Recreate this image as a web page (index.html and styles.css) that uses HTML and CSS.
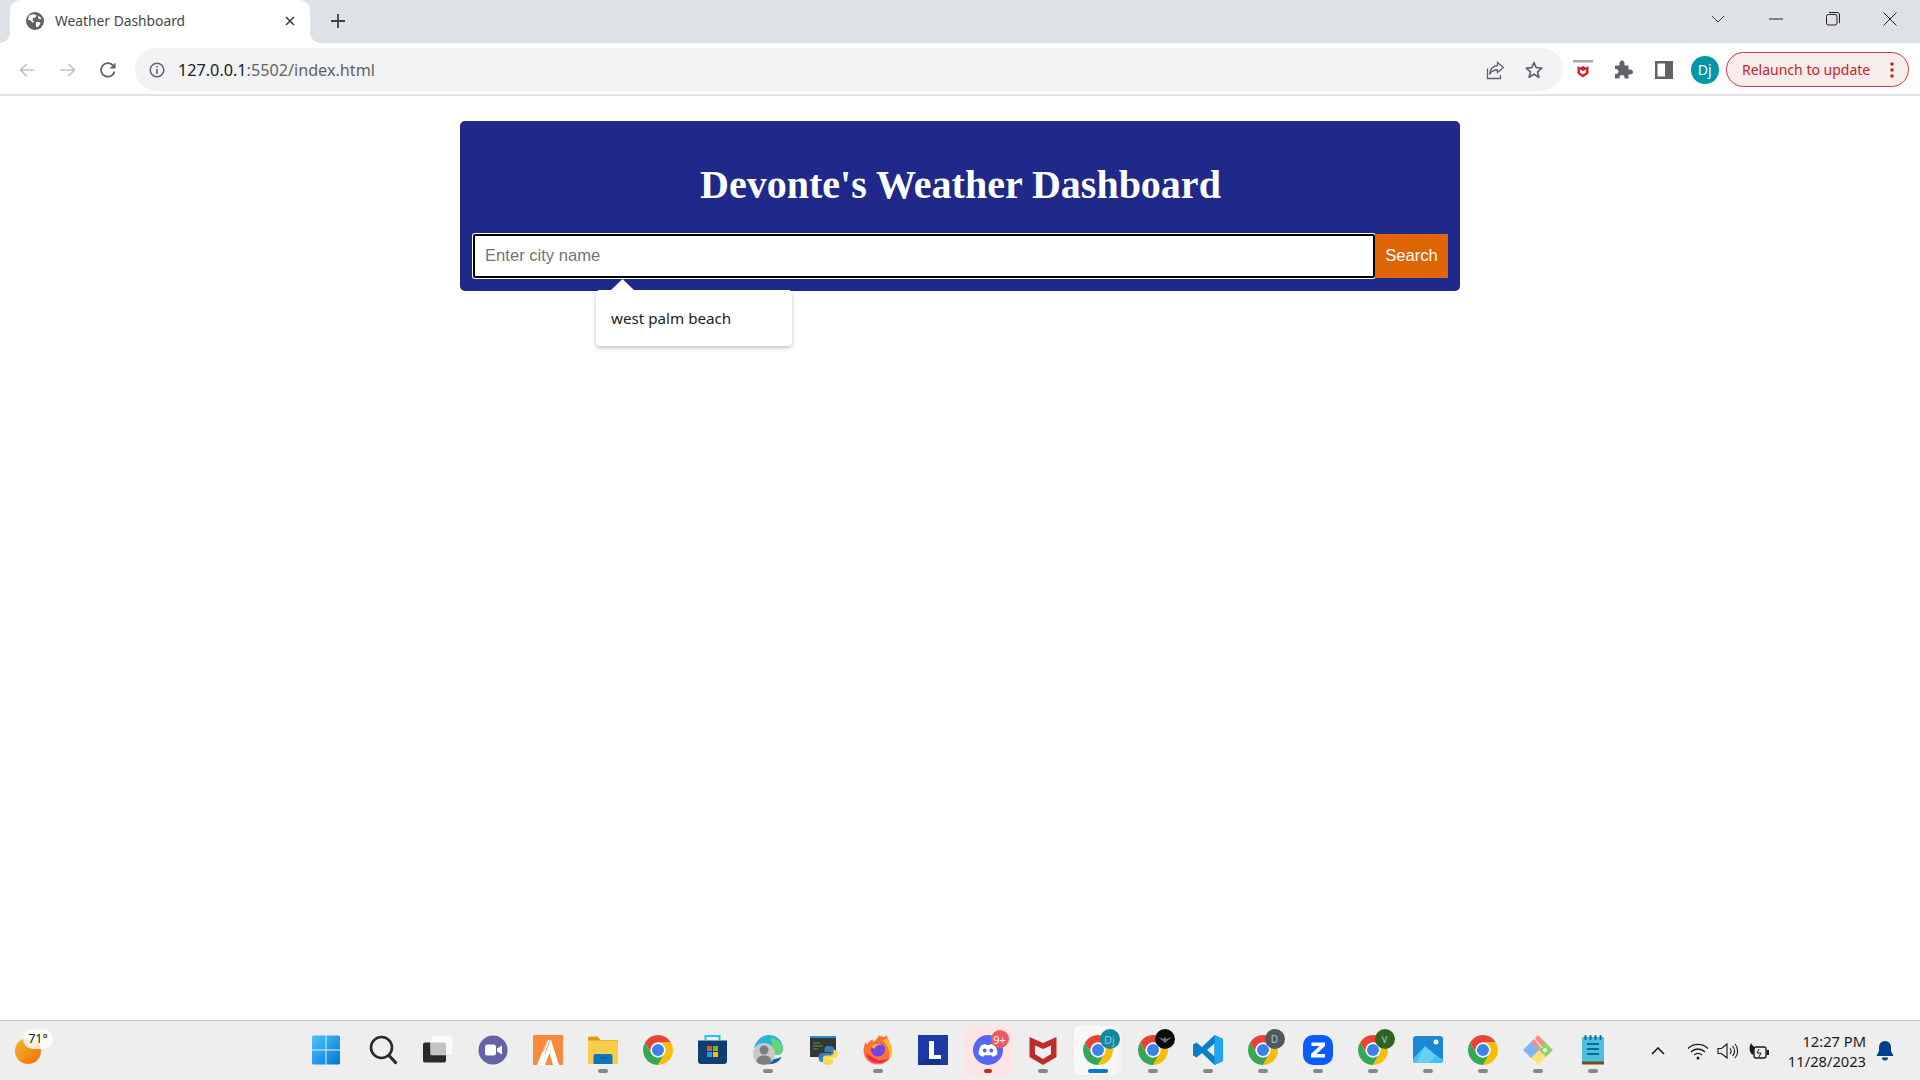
FILE: index.html
```html
<!DOCTYPE html>
<html lang="en">
<head>
<meta charset="utf-8">
<title>Weather Dashboard</title>
<link rel="stylesheet" href="styles.css">
</head>
<body>
<svg class="defs" width="0" height="0" aria-hidden="true">
  <symbol id="chrome" viewBox="4 4 40 40">
    <path fill="#ea4335" d="M41.32 14A20 20 0 0 0 6.68 14L15.34 29A10 10 0 0 1 24 14Z"/>
    <path fill="#34a853" d="M6.68 14A20 20 0 0 0 24 44L32.66 29A10 10 0 0 1 15.34 29Z"/>
    <path fill="#fbbc04" d="M24 44A20 20 0 0 0 41.32 14H24A10 10 0 0 1 32.66 29Z"/>
    <circle cx="24" cy="24" r="10" fill="#fff"/>
    <circle cx="24" cy="24" r="8" fill="#3b82ea"/>
  </symbol>
</svg>

<header class="tabstrip">
  <div class="tab">
    <svg class="favicon" viewBox="0 0 18 18"><circle cx="9" cy="9" r="9" fill="#5f6368"/><path fill="#fff" d="M3 3.5 7.5 2.2 10.5 3 9.5 5.5 7 6 6.5 8 8 9.5 6.8 11 4.5 8.5 2 7.5ZM10 10 13.5 10 14.5 11.5 12.5 14.5 10.5 15.5 10 13ZM12.5 3.5 15.5 6.5 14 7.5 12 6Z"/></svg>
    <span class="tab-title">Weather Dashboard</span>
    <svg class="tab-close" viewBox="0 0 10 10"><path d="M1 1 9 9M9 1 1 9" stroke="#3c4043" stroke-width="1.6" fill="none"/></svg>
  </div>
  <svg class="newtab" viewBox="0 0 14 14"><path d="M7 0V14M0 7H14" stroke="#3c4043" stroke-width="1.8" fill="none"/></svg>
  <div class="winctl">
    <span class="winbtn"><svg width="14" height="8" viewBox="0 0 14 8"><path d="M1 1 7 7 13 1" stroke="#3c4043" fill="none"/></svg></span>
    <span class="winbtn"><svg width="14" height="2" viewBox="0 0 14 2"><path d="M0 1H14" stroke="#222" fill="none"/></svg></span>
    <span class="winbtn"><svg width="14" height="14" viewBox="0 0 14 14"><rect x=".5" y="2.5" width="10.5" height="10.5" rx="2" stroke="#222" fill="none"/><path d="M3 .5H11A2.5 2.5 0 0 1 13.5 3V11" stroke="#222" fill="none"/></svg></span>
    <span class="winbtn"><svg width="14" height="14" viewBox="0 0 14 14"><path d="M.5.5 13.5 13.5M13.5.5.5 13.5" stroke="#222" fill="none"/></svg></span>
  </div>
</header>

<nav class="toolbar">
  <span class="navbtn"><svg width="16" height="14" viewBox="0 0 16 14"><path d="M15.5 7H1.5M7.5 1 1.5 7l6 6" stroke="#bdc1c6" stroke-width="1.7" fill="none"/></svg></span>
  <span class="navbtn"><svg width="16" height="14" viewBox="0 0 16 14"><path d="M.5 7h14M8.5 1l6 6-6 6" stroke="#bdc1c6" stroke-width="1.7" fill="none"/></svg></span>
  <span class="navbtn"><svg width="18" height="18" viewBox="0 0 18 18"><path d="M15.5 10.5A6.8 6.8 0 1 1 13.8 4.2" stroke="#5f6368" stroke-width="1.8" fill="none"/><path d="M16.5 1.5V7.5H10.5Z" fill="#5f6368"/></svg></span>
  <div class="omnibox">
    <svg class="info" width="16" height="16" viewBox="0 0 16 16"><circle cx="8" cy="8" r="6.8" stroke="#5f6368" stroke-width="1.5" fill="none"/><path d="M8 7V12M8 4V5.6" stroke="#5f6368" stroke-width="1.6"/></svg>
    <span class="url"><span class="host">127.0.0.1</span>:5502/index.html</span>
    <span class="omni-actions">
      <svg width="20" height="20" viewBox="0 0 20 20"><path d="M2.5 8.5V18.5H15.5V15" stroke="#5f6368" stroke-width="1.3" fill="none"/><path d="M12.5 2.5 18.5 7.5 12.5 12.5V10C8.500 10 6 11.500 4.500 14.500 5 9.500 8 6 12.500 5.500Z" stroke="#5f6368" stroke-width="1.3" fill="none"/></svg>
      <svg width="20" height="20" viewBox="0 0 20 20"><path d="M10 2.500 12.200 7.700 17.800 8.100 13.500 11.800 14.900 17.300 10 14.300 5.100 17.300 6.500 11.800 2.200 8.100 7.800 7.700Z" stroke="#5f6368" stroke-width="1.7" stroke-linejoin="round" fill="none"/></svg>
    </span>
  </div>
  <span class="extbtn"><svg width="20" height="20" viewBox="0 0 20 20"><rect x="0" y="0" width="20" height="2.500" fill="#a8a8a8"/><path d="M4.500 6 7 7.500 10 6 13 7.500 15.500 6V13.500L10 17.500 4.500 13.500Z" fill="#d3232a"/><path d="M7 9.500 10 11 13 9.500V12.500L10 14.500 7 12.500Z" fill="#fff"/></svg></span>
  <span class="extbtn"><svg width="19" height="19" viewBox="0 0 19 19"><path fill="#5f6368" d="M1 5.500H5.500C5 2 6.500 .5 8 .5S11 2 10.500 5.500H14.500V9.500C18 9 19 10.500 19 12S18 15 14.500 14.500V18.500H10.500C11 16 9.500 15 8 15S5 16 5.500 18.500H1V14C3.500 14.500 4.500 13 4.500 11.500S3.500 8.500 1 9Z"/></svg></span>
  <span class="extbtn"><svg width="18" height="18" viewBox="0 0 18 18"><path fill="#5f6368" fill-rule="evenodd" d="M0 0H18V18H0ZM2.500 2.500V15.500H10V2.500Z"/></svg></span>
  <span class="extbtn"><span class="avatar">Dj</span></span>
  <div class="relaunch">
    <span class="relaunch-text">Relaunch to update</span>
    <svg width="4" height="16" viewBox="0 0 4 16"><circle cx="2" cy="2" r="1.700" fill="#c5221f"/><circle cx="2" cy="8" r="1.700" fill="#c5221f"/><circle cx="2" cy="14" r="1.700" fill="#c5221f"/></svg>
  </div>
</nav>

<main class="page">
  <section class="card">
    <h1 class="title">Devonte's Weather Dashboard</h1>
    <form class="search">
      <input class="city" type="text" placeholder="Enter city name">
      <button class="go" type="button">Search</button>
    </form>
    <div class="suggest">west palm beach</div>
  </section>
</main>

<footer class="taskbar">
  <div class="weather">
    <span class="sun"></span>
    <span class="temp">71°</span>
  </div>
  <div class="apps">
    <span class="app app-start"><svg class="ic" viewBox="0 0 30 30"><defs><linearGradient id="w" x1="0" y1="0" x2="1" y2="1"><stop offset="0" stop-color="#4cc2ff"/><stop offset="1" stop-color="#0078d4"/></linearGradient></defs><path fill="url(#w)" d="M1 2A1.500 1.500 0 0 1 2.500.5H14.500V14.500H1ZM15.500.5H27.500A1.500 1.500 0 0 1 29 2V14.500H15.500ZM1 15.500H14.500V29.500H2.500A1.500 1.500 0 0 1 1 28ZM15.500 15.500H29V28A1.500 1.500 0 0 1 27.500 29.500H15.500Z"/></svg></span>
    <span class="app"><svg class="ic" viewBox="0 0 30 30"><circle cx="13.500" cy="12.500" r="10.500" stroke="#2b2b2b" stroke-width="2.600" fill="none"/><path d="M21 20.500 27.500 27.500" stroke="#2b2b2b" stroke-width="3.200" stroke-linecap="round"/></svg></span>
    <span class="app"><svg class="ic" viewBox="0 0 30 30"><rect x="0" y="7.500" width="23" height="20" rx="2" fill="#2a2a2a"/><rect x="7.500" y="0" width="22.500" height="20" rx="1.500" fill="#fff" fill-opacity=".72" stroke="#ddd" stroke-width=".5"/></svg></span>
    <span class="app"><svg class="ic" viewBox="0 0 30 30"><circle cx="15" cy="15" r="14.500" fill="#6264a7"/><rect x="7" y="9.500" width="11" height="11" rx="2.500" fill="#fff"/><path d="M19 13.500 24 10.500V19.500L19 16.500Z" fill="#fff"/></svg></span>
    <span class="app"><svg class="ic" viewBox="0 0 30 30"><rect width="30" height="30" fill="#f98a3b"/><path d="M4 30 14 5H18L26 30H20L16.500 18 12 30Z" fill="#fff"/><path d="M14.500 5 10 17M17 5 12 19" stroke="#f98a3b" stroke-width=".8"/></svg></span>
    <span class="app on"><svg class="ic" viewBox="0 0 30 30"><path d="M0 3A1.500 1.500 0 0 1 1.500 1.500H9.500L12.500 5H30V10H0Z" fill="#d99f0b"/><path d="M0 5.500H30V29H0Z" fill="#fbcd4d"/><path d="M5.500 21A2 2 0 0 1 7.500 19H22A2.500 2.500 0 0 1 24.500 21.500V29H5.500Z" fill="#0a76bd" transform="translate(0 0)"/><path d="M11 23H20" stroke="#05507f"/></svg></span>
    <span class="app"><svg class="ic" viewBox="0 0 48 48"><use href="#chrome"/></svg></span>
    <span class="app"><svg class="ic" viewBox="0 0 30 30"><path d="M7.500 5V1H21.500V5" stroke="#28c0ef" stroke-width="2" fill="none"/><path d="M0 5.500H29V26A3 3 0 0 1 26 29H3A3 3 0 0 1 0 26Z" fill="#0e3f73"/><rect x="9" y="11" width="5" height="5" fill="#f25022"/><rect x="15" y="11" width="5" height="5" fill="#7fba00"/><rect x="9" y="17" width="5" height="5" fill="#00a4ef"/><rect x="15" y="17" width="5" height="5" fill="#ffb900"/></svg></span>
    <span class="app on"><svg class="ic" viewBox="0 0 30 30"><path d="M1 13C3 5 9 0 16 0 24 0 30 6 30 14 30 18 27 20 23 20H12C12 12 8 9 1 13Z" fill="#2bb4d8"/><path d="M18 3C25 4 30 9 30 14 30 18 27 20 23 20H16C19 15 20 9 18 3Z" fill="#63d678"/><path d="M14 29C20 30 27 27 28.500 21.500 25 24 20 24.500 17 24Z" fill="#0f5fa8"/><circle cx="11" cy="19" r="11" fill="#c9c9c9"/><circle cx="11" cy="15" r="4.500" fill="#7d7d7d"/><path d="M3.500 27C4 22 7 20.500 11 20.500S18 22 18.500 27C14.500 30.500 7.500 30.500 3.500 27Z" fill="#7d7d7d"/></svg></span>
    <span class="app"><svg class="ic" viewBox="0 0 30 30"><path d="M2 1.500H28V22H2Z" fill="#353535"/><path d="M2 1H28V3H2Z" fill="#2a8fcb"/><path d="M5 8H12M5 11H15M5 14H10" stroke="#3ea84a"/><path d="M21 11C17 11 16.500 12.500 16.500 15V17H23V18H14C11.500 18 10.500 20 10.500 22.500S12 27 14 27H16V24C16 22 17.500 21 20 21H24C25.500 21 26.500 20 26.500 18.500V15C26.500 12.500 25 11 21 11Z" fill="#3b7fb4"/><path d="M22 30C26 30 26.500 28.500 26.500 26V24H20V23H29C31 23 31 21 31 19 31 17 30 15 28 15H27V17.500C27 19.500 25.500 20.500 23 20.500H19C17.500 20.500 16.500 21.500 16.500 23V26C16.500 28.500 18 30 22 30Z" fill="#fbd94f" transform="translate(-1.500 0)"/></svg></span>
    <span class="app on"><svg class="ic" viewBox="0 0 30 30"><path d="M29 16C29 24 22 29.500 15 29.500 7 29.500 .5 23.500 .5 15.500.5 12 1.500 9 3 7L4 10C6 6 8 5 10 4.500 9.500 6 10 7 10 7 12 5.500 15 3 16 .5 20 2 22 3 23 0 25 3 26 6 26 7 28 9.500 29 12.500 29 16Z" fill="#ff7139"/><path d="M24 3 26 7C28 9.500 29 12.500 29 16 29 19 28 21.500 26 24 27 16 25 9 19 5 21 5 23 4.500 24 3Z" fill="#ffbd2e"/><path d="M3 19C5 25 10 28 15 28 20 28 24 26 26 23 22 25.500 17 26 13 24 9 22 7 21 3 19Z" fill="#e62a55"/><circle cx="15" cy="14.500" r="7" fill="#7542e5"/><path d="M8 12C10 8 16 7 20 10 15 9 12 11 12 14Z" fill="#ffa436"/></svg></span>
    <span class="app"><svg class="ic" viewBox="0 0 30 30"><rect width="30" height="30" fill="#1b3aa6"/><path d="M11 6H16V20H23V24H11Z" fill="#fff"/><path d="M0 30 9 21V24H22V30Z" fill="#0e2a7c" fill-opacity=".55"/></svg></span>
    <span class="app app-alert"><svg class="ic" viewBox="0 0 30 30"><circle cx="15" cy="15" r="15" fill="#5865f2"/><path d="M8 10.500C10 9.500 11.500 9 12.500 9L13 10H17L17.500 9C18.500 9 20 9.500 22 10.500 24 13.500 24.500 16.500 24.300 19.500 22.500 20.800 21 21.500 19.500 21.800L18.500 20.300H11.500L10.500 21.800C9 21.500 7.500 20.800 5.700 19.500 5.500 16.500 6 13.500 8 10.500Z" fill="#fff"/><circle cx="11.700" cy="15.500" r="1.900" fill="#5865f2"/><circle cx="18.300" cy="15.500" r="1.900" fill="#5865f2"/></svg><span class="badge badge-red">9+</span></span>
    <span class="app on"><svg class="ic" viewBox="0 0 30 30"><path d="M1.500 2 15 8 28.500 2V22L15 30 1.500 22Z" fill="#bd2d2d"/><path d="M7 10.500 15 14 23 10.500V19L15 24 7 19Z" fill="#eee"/></svg></span>
    <span class="app app-active on"><svg class="ic" viewBox="0 0 48 48"><use href="#chrome"/></svg><span class="badge badge-chrome badge-teal">Dj</span></span>
    <span class="app on"><svg class="ic" viewBox="0 0 48 48"><use href="#chrome"/></svg><span class="badge badge-chrome badge-black"><svg width="14" height="7" viewBox="0 0 14 7"><path d="M0 1 6 3 7 0 8 3 14 1 9 5 7 7 5 5Z" fill="#777"/></svg></span></span>
    <span class="app on"><svg class="ic" viewBox="0 0 30 30"><path d="M21.500 0 30 4V26L21.500 30 9 18 3.500 22.500 0 20.500V9.500L3.500 7.500 9 12ZM21.500 8.500 14 15 21.500 21.500Z" fill="#0a7fc9"/><path d="M21.500 0 30 4V26L21.500 30Z" fill="#1fa5f1"/></svg></span>
    <span class="app on"><svg class="ic" viewBox="0 0 48 48"><use href="#chrome"/></svg><span class="badge badge-chrome badge-slate">D</span></span>
    <span class="app on"><svg class="ic" viewBox="0 0 30 30"><rect width="30" height="30" rx="10" fill="#0b5cff"/><path d="M8.500 7.500H22V11L13.500 19H22V22.500H8V19L16.500 11H8.500Z" fill="#fff"/></svg></span>
    <span class="app on"><svg class="ic" viewBox="0 0 48 48"><use href="#chrome"/></svg><span class="badge badge-chrome badge-green">V</span></span>
    <span class="app on"><svg class="ic" viewBox="0 0 30 30"><rect y="1" width="30" height="27" rx="3" fill="#1c87d6"/><path d="M0 24 12 11 19 17 30 25V25A3 3 0 0 1 27 28H3A3 3 0 0 1 0 25Z" fill="#3fc4ee"/><path d="M12 11 23 21 16 28H3Z" fill="#7fdcf5" fill-opacity=".6"/><circle cx="23" cy="7" r="2.500" fill="#fff"/></svg></span>
    <span class="app on"><svg class="ic" viewBox="0 0 48 48"><use href="#chrome"/></svg></span>
    <span class="app on"><svg class="ic" viewBox="0 0 30 30"><path d="M15 15 7 7 15-1 23 7Z" fill="#ff8a8a" transform="translate(0 1)"/><path d="M15 15 23 7 31 15 23 23Z" fill="#8ed46a" transform="translate(-1 0)"/><path d="M15 15 7 23 15 31 23 23Z" fill="#ffe27a" transform="translate(0 -1)"/><path d="M15 15 7 7-1 15 7 23Z" fill="#7fb4f9" transform="translate(1 0)"/><path d="M11 3 19 13" stroke="#fff" stroke-width="1.200"/><circle cx="22" cy="15" r="2" fill="#fff"/></svg></span>
    <span class="app on"><svg class="ic" viewBox="0 0 30 30"><rect x="4" y="2" width="22" height="26" rx="1" fill="#4dbde0"/><rect x="4" y="26.500" width="22" height="3" fill="#7a4a1c"/><path d="M9 9H21M9 14H21M9 19H21" stroke="#0b6a94" stroke-width="2"/><path d="M7.500 1V4M12.500 1V4M17.500 1V4M22.500 1V4" stroke="#0b6a94" stroke-width="2" stroke-linecap="round"/></svg></span>
  </div>
  <div class="tray">
    <svg class="tray-ic chev" viewBox="0 0 14 8"><path d="M1 7 7 1 13 7" stroke="#1a1a1a" stroke-width="1.600" fill="none"/></svg>
    <svg class="tray-ic" viewBox="0 0 22 18"><path d="M1 6.500C6.500 1 15.500 1 21 6.500M4 10C8 6 14 6 18 10M7 13C9.500 11 12.500 11 15 13" stroke="#1a1a1a" stroke-width="1.300" fill="none"/><circle cx="11" cy="16" r="1.500" fill="#1a1a1a"/></svg>
    <svg class="tray-ic" viewBox="0 0 22 18"><path d="M1 6.500H4.500L10 2V16L4.500 11.500H1Z" stroke="#1a1a1a" stroke-width="1.100" fill="none"/><path d="M13 6C14.500 8 14.500 10 13 12M15.500 4C18 7 18 11 15.500 14M18 2C21.500 6 21.500 12 18 16" stroke="#1a1a1a" stroke-width="1.100" fill="none"/></svg>
    <svg class="tray-ic" viewBox="0 0 22 18"><path d="M3 1C1 5 1 9 4 12.500H8V6C6 5 4 3.500 3 1Z" fill="#1a1a1a"/><rect x="6" y="5" width="12" height="11" rx="2" stroke="#1a1a1a" stroke-width="1.300" fill="#eee"/><path d="M11 7 9 11H13L11 15" stroke="#1a1a1a" fill="none"/><rect x="18.500" y="8" width="2.500" height="5" fill="#1a1a1a"/></svg>
    <div class="clock"><span>12:27 PM</span><span>11/28/2023</span></div>
    <svg class="bell" viewBox="0 0 18 20"><path d="M9 0C5 0 3 3 3 6.500V10L.5 15H17.500L15 10V6.500C15 3 13 0 9 0Z" fill="#003e92"/><path d="M6 16.500A3 3 0 0 0 12 16.500Z" fill="#003e92"/></svg>
  </div>
</footer>
</body>
</html>
```
FILE: styles.css
```css
* { box-sizing: border-box; }
html, body { height: 100%; }
body { margin: 0; display: flex; flex-direction: column; height: 100vh; overflow: hidden; background: #fff; font-family: "Noto Sans", sans-serif; }
.defs { position: absolute; }

/* browser chrome */
.tabstrip { height: 43px; flex: none; display: flex; align-items: center; background: #dee1e6; padding-left: 10px; }
.tab { position: relative; width: 300px; height: 43px; background: #fff; border-radius: 10px 10px 0 0; display: flex; align-items: center; padding: 0 15px 2px 16px; }
.tab::before, .tab::after { content: ""; position: absolute; bottom: 0; width: 10px; height: 10px; }
.tab::before { left: -10px; background: radial-gradient(circle at 0 0, #dee1e6 9.5px, #fff 10px); }
.tab::after { right: -10px; background: radial-gradient(circle at 100% 0, #dee1e6 9.5px, #fff 10px); }
.favicon { width: 18px; height: 18px; flex: none; }
.tab-title { margin-left: 11px; flex: 1; font-size: 13.800px; color: #45474a; }
.tab-close { width: 10px; height: 10px; flex: none; }
.newtab { width: 14px; height: 14px; margin-left: 21px; margin-bottom: 2px; }
.winctl { margin-left: auto; display: flex; padding-right: 1px; margin-bottom: 6px; }
.winbtn { width: 57.300px; height: 30px; display: flex; align-items: center; justify-content: center; }

.toolbar { height: 53px; flex: none; display: flex; align-items: center; padding: 2px 11px 0 7px; background: #fff; border-bottom: 2px solid #e1e3e6; }
.navbtn { width: 40.500px; display: flex; justify-content: center; flex: none; }
.omnibox { flex: 1; margin-left: 6.500px; height: 43px; border-radius: 22px; background: #f1f3f4; display: flex; align-items: center; padding: 0 19.500px 0 14px; }
.info { flex: none; }
.url { margin-left: 13px; font-size: 16.200px; color: #5f6368; }
.host { color: #202124; }
.omni-actions { margin-left: auto; display: flex; gap: 19px; }
.extbtn { width: 40.500px; display: flex; justify-content: center; align-items: center; flex: none; }
.extbtn:first-of-type { margin-left: 8px; }
.avatar { width: 28px; height: 28px; border-radius: 50%; background: #0097a7; color: #fff; font-size: 14px; display: flex; align-items: center; justify-content: center; }
.relaunch { width: 183px; height: 35px; margin-left: 1px; flex: none; display: flex; align-items: center; padding: 0 14px 0 15px; border: 1px solid #d0393d; border-radius: 18px; background: #f9edec; }
.relaunch-text { flex: 1; font-size: 14px; color: #c5221f; white-space: nowrap; }

/* page */
.page { flex: 1; min-height: 0; padding-top: 25px; }
.card { position: relative; width: 1000px; margin: 0 auto; height: 170px; background: #1e2989; border-radius: 5px; padding: 0 12px 13px 13px; display: flex; flex-direction: column; justify-content: flex-end; }
.title { margin: 0 0 24px; text-align: center; color: #fff; font: bold 40px/50px "Liberation Serif", serif; }
.search { display: flex; height: 44px; }
.city { flex: 1; min-width: 0; border: 0; border-radius: 2px; padding: 0 12px; background: #fff; box-shadow: inset 0 0 0 2px #000, 0 0 0 1px #fff; font: 16.600px "Liberation Sans", sans-serif; outline: none; }
.city::placeholder { color: #757575; }
.go { width: 73px; flex: none; border: 0; background: #dd6506; color: #fff; font: 16.600px "Liberation Sans", sans-serif; padding: 0; }
.suggest { position: absolute; left: 136px; top: 169px; width: 196px; height: 56px; padding-left: 15px; display: flex; align-items: center; background: #fff; border-radius: 4px; box-shadow: 0 2px 4px rgba(0,0,0,.25); font-size: 15.200px; color: #202124; }
.suggest::before { content: ""; position: absolute; left: 15px; top: -11px; width: 23px; height: 11px; background: #fff; clip-path: polygon(50% 0, 100% 100%, 0 100%); }

/* taskbar */
.taskbar { height: 60px; flex: none; display: flex; align-items: center; background: #eee; border-top: 1px solid #c4c4c4; }
.weather { position: relative; width: 298.500px; height: 100%; flex: none; }
.sun { position: absolute; left: 15px; top: 17px; width: 26px; height: 26px; border-radius: 50%; background: linear-gradient(135deg, #f2bb2c, #f46a0c); }
.temp { position: absolute; left: 23px; top: 8px; width: 30px; height: 20px; border-radius: 10px; background: rgba(255,255,255,.82); font-size: 12.500px; line-height: 20px; text-align: center; color: #1a1a1a; }
.apps { display: flex; height: 100%; flex: none; }
.app { position: relative; width: 55px; height: 100%; flex: none; display: flex; align-items: center; justify-content: center; padding-bottom: 1px; }
.app.app-start { width: 57px; justify-content: flex-start; padding-left: 12.500px; }
.ic { width: 30px; height: 30px; display: block; }
.app.on::after { content: ""; position: absolute; left: 50%; bottom: 7px; width: 10px; height: 4px; margin-left: -5px; border-radius: 2px; background: #888; }
.app-alert::before { content: ""; position: absolute; left: 3px; right: 2px; top: 4px; bottom: 4px; border-radius: 6px; background: #fde5e6; }
.app-alert .ic { position: relative; }
.app-alert::after { content: ""; position: absolute; left: 50%; bottom: 7px; width: 8px; height: 4px; margin-left: -4px; border-radius: 2px; background: #c42b1c; }
.app-active::before { content: ""; position: absolute; left: 3px; right: 9px; top: 5px; bottom: 5px; border-radius: 5px; background: #f8f8f8; box-shadow: 5px 0 0 -1px #f4f4f4; }
.app-active .ic { position: relative; }
.app.app-active::after { width: 20px; margin-left: -10px; background: #0078d4; }
.badge { position: absolute; display: flex; align-items: center; justify-content: center; border-radius: 50%; color: #fff; }
.badge-red { left: 30px; top: 9px; width: 18px; height: 18px; background: #ee5a5e; font-size: 11px; }
.badge-chrome { left: 29px; top: 8px; width: 20px; height: 20px; font-size: 10px; }
.badge-teal { background: #0e8c9b; color: #9be; font-size: 11px; }
.badge-black { background: #0a0a0a; }
.badge-slate { background: #4d5a62; color: #bbb; }
.badge-green { background: #2f6420; color: #bcd; font-size: 9px; }
.tray { margin-left: auto; display: flex; align-items: center; height: 100%; padding-right: 26px; }
.tray-ic { width: 22px; height: 18px; margin-left: 8.500px; }
.chev { width: 14px; height: 8px; margin-right: 13px; }
.clock { margin-left: 18px; display: flex; flex-direction: column; align-items: flex-end; font-size: 14.700px; line-height: 20px; color: #1a1a1a; }
.bell { width: 18px; height: 20px; margin-left: 10px; }
```
